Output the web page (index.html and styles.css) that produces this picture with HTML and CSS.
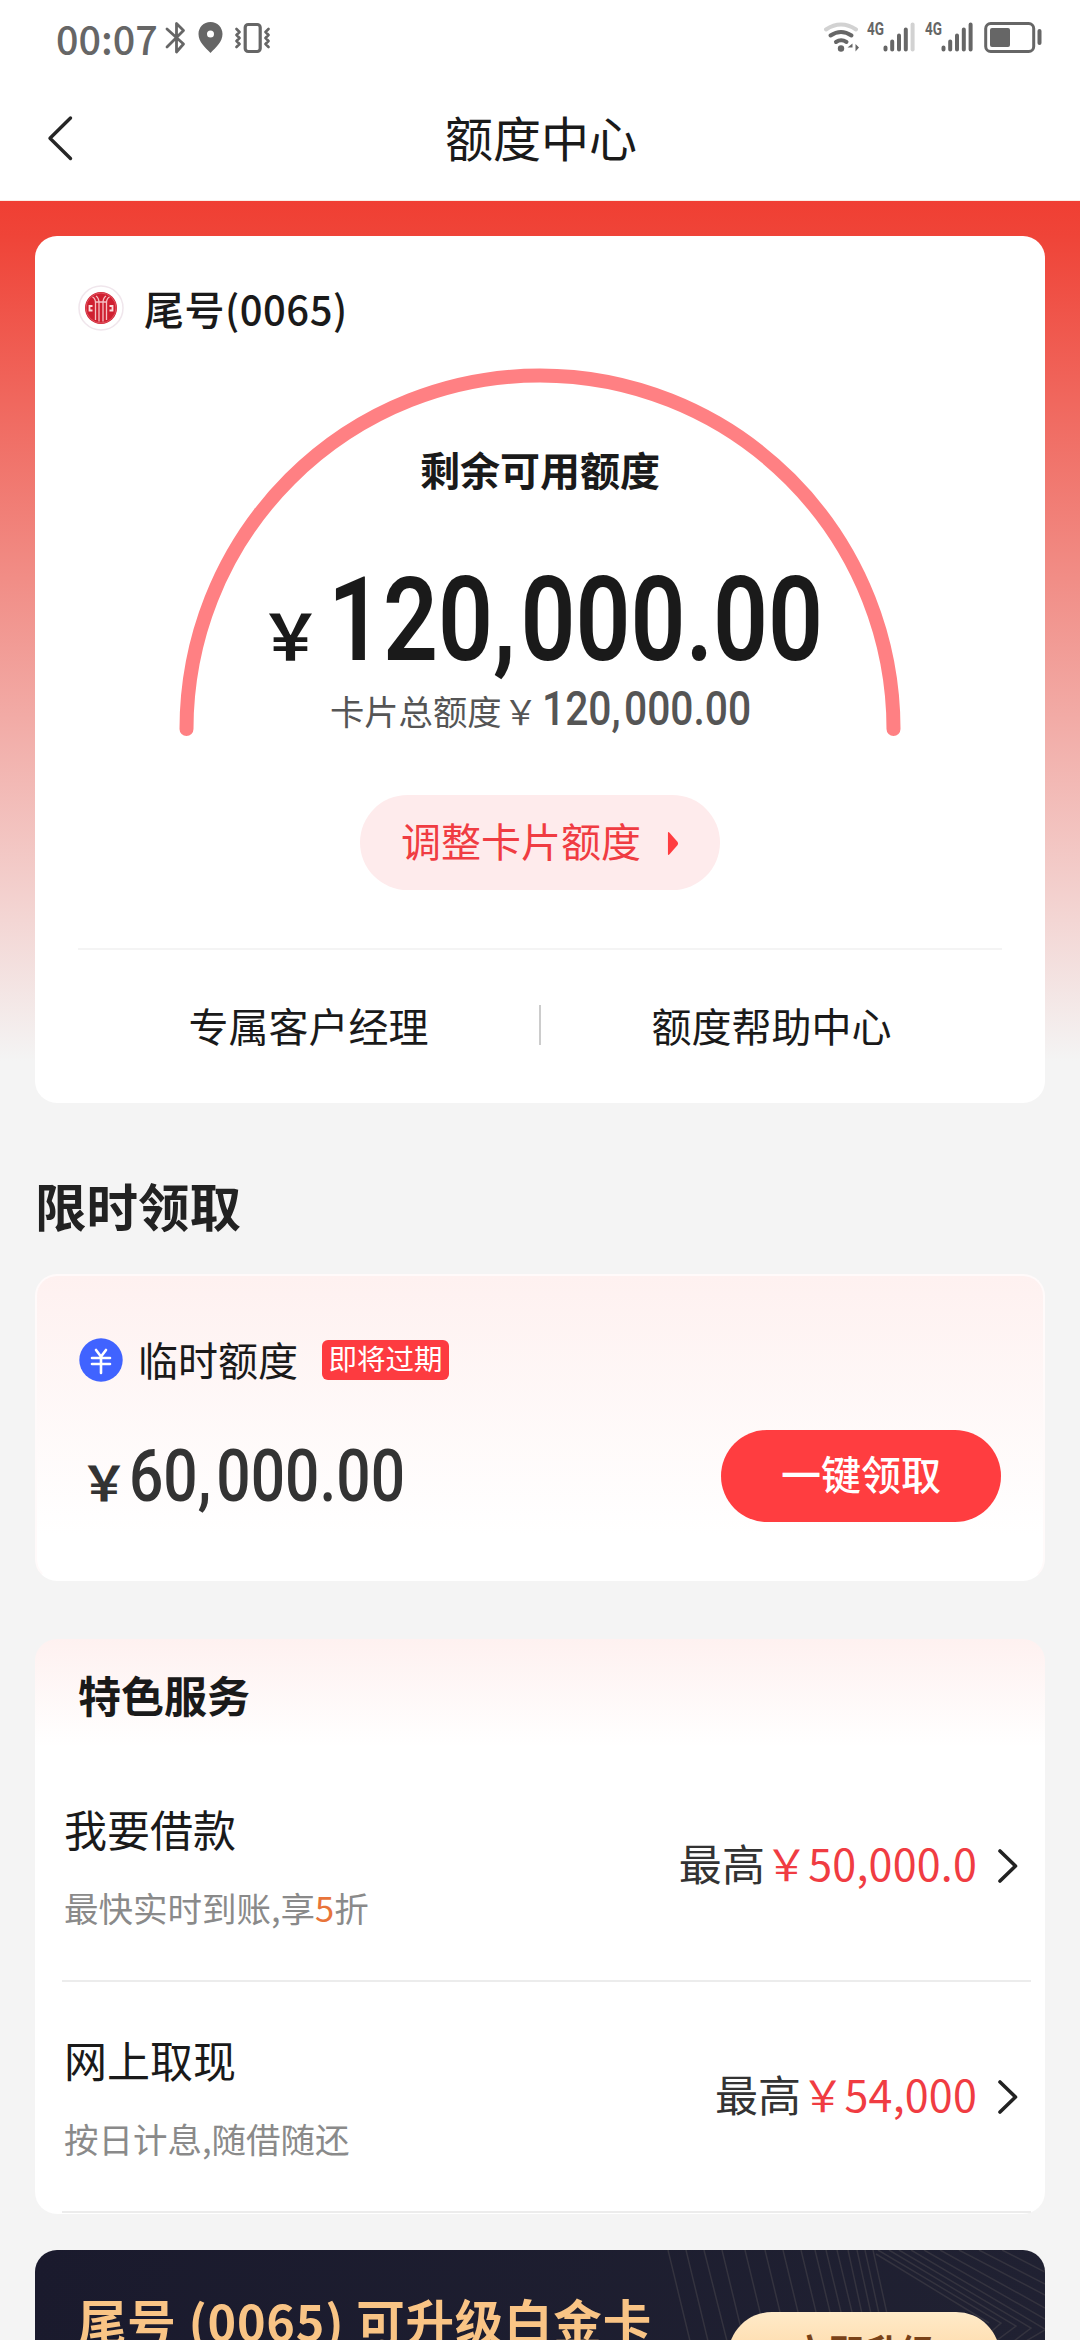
FILE: index.html
```html
<!DOCTYPE html>
<html lang="zh-CN">
<head>
<meta charset="utf-8">
<title>额度中心</title>
<link rel="stylesheet" href="styles.css">
</head>
<body>
<header class="top">
  <div class="status">
    <span class="clock">00:07</span>
    <svg class="status-left" width="110" height="40" viewBox="162 18 110 40" fill="none" stroke="#666" stroke-width="2.8" stroke-linecap="round" stroke-linejoin="round">
      <path d="M167 29 L183.500 44 L176.500 52 V40 M167 47 L183.500 30.500 L176.500 23.500 V35"/>
      <path d="M210.500 22 C203.500 22 198.500 27.500 198.500 34 C198.500 42 205 47 210.500 53 C216 47 222.500 42 222.500 34 C222.500 27.500 217.500 22 210.500 22 Z M210.500 30.500 A3.500 3.500 0 0 1 210.500 37.500 A3.500 3.500 0 0 1 210.500 30.500 Z" fill="#666" fill-rule="evenodd" stroke="none"/>
      <rect x="245.200" y="24.500" width="15" height="27" rx="3" stroke-width="3.200"/>
      <path d="M236.500 29 L239.500 32 L236.500 35 L239.500 38 L236.500 41 L239.500 44 L236.500 47 M268.500 29 L265.500 32 L268.500 35 L265.500 38 L268.500 41 L265.500 44 L268.500 47" stroke-width="2.600"/>
    </svg>
    <svg class="status-right" width="230" height="40" viewBox="820 18 230 40" fill="none" stroke="#666" stroke-linecap="round">
      <path d="M825 29.500 Q840 19.500 855 29.500" stroke="#d2d2d2" stroke-width="4"/>
      <path d="M829.500 35.500 Q840 28.500 850.500 35.500 M835 42 Q840 38.500 845.500 42" stroke-width="4"/>
      <circle cx="840" cy="48.500" r="3.200" fill="#666" stroke="none"/>
      <path d="M846.500 47.500 L851.500 43.500 V51.500 V47.500 Z M854.500 44 V51.500 L858 47.500 Z" fill="#666" stroke="none"/>
      <path d="M884.500 47.500 V49.500 M891.200 41.500 V49.500 M898 35.500 V49.500 M904.800 29.500 V49.500" stroke-width="4"/>
      <path d="M911.600 24.500 V49.500" stroke="#d2d2d2" stroke-width="4"/>
      <path d="M942.500 47.500 V49.500 M949.200 41.500 V49.500 M956 35.500 V49.500 M962.800 29.500 V49.500 M969.600 24.500 V49.500" stroke-width="4"/>
      <rect x="984.700" y="23.500" width="48" height="28" rx="5" stroke-width="3"/>
      <rect x="989" y="28" width="20" height="19" rx="2" fill="#666" stroke="none"/>
      <path d="M1038.500 31 V43" stroke-width="4"/>
      <g class="net" fill="#666" stroke="none"><text x="866" y="35" textLength="17" lengthAdjust="spacingAndGlyphs">4G</text><text x="924" y="35" textLength="17" lengthAdjust="spacingAndGlyphs">4G</text></g>
    </svg>
  </div>
  <nav class="nav">
    <svg class="back" width="30" height="50" viewBox="0 0 30 50" fill="none" stroke="#262626" stroke-width="3.400" stroke-linecap="round" stroke-linejoin="round"><path d="M24.500 5 L4 25.300 L24.500 45.500"/></svg>
    <h1>额度中心</h1>
  </nav>
</header>

<main>
  <section class="card quota">
    <div class="bank">
      <svg width="46" height="46" viewBox="0 0 46 46" fill="none">
        <circle cx="23" cy="23" r="22" fill="#fff" stroke="#f0e6ec" stroke-width="1.500"/>
        <circle cx="23" cy="23" r="16" fill="#cf1f30"/>
        <circle cx="23" cy="23" r="15" stroke="#e4606b" stroke-width=".8"/>
        <path d="M17.500 35 V18 Q17.500 13.500 14.500 12 M21 36.500 V18 Q21 13 18 11 M25 36.500 V18 Q25 13 28 11 M28.500 35 V18 Q28.500 13.500 31.500 12 M17.500 17 H28.500" stroke="#f6c0c4" stroke-width="1.300"/>
        <path d="M14.500 21 H11.500 V25.500 H14.500 M31.500 21 H34.500 V25.500 H31.500" stroke="#fbdcdc" stroke-width="1.800"/>
      </svg>
      <span>尾号(0065)</span>
    </div>
    <div class="gauge">
      <svg class="arc" width="1010" height="410" viewBox="35 338 1010 410" fill="none"><path d="M186.500 729 A353.500 353.500 0 0 1 893.500 729" stroke="#ff8083" stroke-width="14" stroke-linecap="round"/></svg>
      <div class="gauge-text">
        <p class="gauge-title">剩余可用额度</p>
        <p class="amount"><span class="yen">&#xFFE5;</span><span class="din">120<i>,</i>000<i>.</i>00</span></p>
        <p class="total"><span>卡片总额度</span><span class="yen">&#xFFE5;</span><span class="din">120<i>,</i>000<i>.</i>00</span></p>
      </div>
    </div>
    <button class="adjust">调整卡片额度<svg width="12" height="25" viewBox="0 0 13 26" preserveAspectRatio="none"><path d="M1 2 Q1 0 3 2 L11.500 11.500 Q12.500 13 11.500 14.500 L3 24 Q1 26 1 24 Z" fill="#ff3d40"/></svg></button>
    <div class="links"><a>专属客户经理</a><span class="bar"></span><a>额度帮助中心</a></div>
  </section>

  <h2>限时领取</h2>

  <section class="card temp">
    <div class="temp-head">
      <svg width="44" height="44" viewBox="0 0 44 44" fill="none"><circle cx="22" cy="22" r="21.700" fill="#4063ff"/><path d="M17 12 L22 18.500 L27 12 M13 20 H31 M13 26 H31 M22 19 V35" stroke="#fff" stroke-width="2.600" stroke-linecap="round"/></svg>
      <span class="temp-name">临时额度</span><span class="tag">即将过期</span>
    </div>
    <div class="temp-body">
      <p class="temp-amount"><span class="yen">&#xFFE5;</span><span class="din">60<i>,</i>000<i>.</i>00</span></p>
      <button class="claim">一键领取</button>
    </div>
  </section>

  <section class="card services">
    <h3>特色服务</h3>
    <div class="row">
      <div class="info"><p class="name">我要借款</p><p class="desc">最快实时到账,享<em>5</em>折</p></div>
      <p class="max">最高<span>&#xFFE5;50,000.0</span></p>
      <svg class="chev" width="22" height="36" viewBox="0 0 22 36" fill="none" stroke="#222" stroke-width="3.600" stroke-linecap="round" stroke-linejoin="round"><path d="M3 3 L18.500 18 L3 33"/></svg>
    </div>
    <div class="row">
      <div class="info"><p class="name">网上取现</p><p class="desc">按日计息,随借随还</p></div>
      <p class="max">最高<span>&#xFFE5;54,000</span></p>
      <svg class="chev" width="22" height="36" viewBox="0 0 22 36" fill="none" stroke="#222" stroke-width="3.600" stroke-linecap="round" stroke-linejoin="round"><path d="M3 3 L18.500 18 L3 33"/></svg>
    </div>
  </section>

  <section class="banner">
    <svg class="rays" width="1010" height="91" viewBox="35 2249 1010 91" fill="none" stroke="#34333f" stroke-width="1.500">
      <path d="M668 2249 L690 2340 M686 2249 L708 2340 M704 2249 L727 2340 M722 2249 L744 2340 M745 2249 L767 2340 M765 2249 L787 2340 M783 2249 L805 2340 M801 2249 L823 2340 M815 2249 L837 2340 M826 2249 L848 2340 M837 2249 L859 2340 M848 2249 L868 2340 M857 2249 L877 2340 M865 2249 L885 2340 M873 2249 L893 2340"/>
      <path d="M876 2253 L989 2322 M878 2249 L1001 2322 L985 2336 M889 2249 L1016 2325 L996 2340 M899 2249 L1031 2327 L1014 2340 M911 2249 L1045 2328 M924 2249 L1045 2318 M940 2249 L1045 2307 M959 2249 L1045 2294 M979 2249 L1045 2283 M1002 2249 L1045 2271 M1026 2340 L1045 2329"/>
    </svg>
    <p class="upgrade">尾号 (0065) 可升级白金卡</p>
    <button class="gold">立即升级</button>
  </section>
</main>
</body>
</html>
```
FILE: styles.css
```css
* { box-sizing: border-box; margin: 0; padding: 0; }
body {
  width: 1080px;
  height: 2340px;
  overflow: hidden;
  background: #f4f4f4;
  color: #1a1a1a;
  font-family: "Noto Sans CJK SC", sans-serif;
  font-size: 40px;
}
button { border: 0; font: inherit; }
svg { display: block; flex: none; }
em, i { font-style: normal; font-weight: inherit; }

.top { height: 201px; background: #fff; border-bottom: 1px solid #fbeee6; }
.status { display: flex; align-items: center; height: 76px; padding: 0 29px 0 56px; }
.clock { width: 106px; color: #666; font-size: 39.500px; font-weight: 500; line-height: 76px; }
.status-right { margin-left: auto; }
.net { font: 700 18px Roboto, sans-serif; }
.nav { display: flex; align-items: center; height: 124px; padding: 0 44px 0 46px; }
.nav h1 { flex: 1; margin-right: 30px; padding-bottom: 5px; text-align: center; font-size: 48px; font-weight: 400; line-height: 116px; }

main {
  height: 2139px;
  padding: 35px 35px 0;
  background: linear-gradient(#f03f33 0, #ef4438 35px, #f4f4f4 860px) no-repeat #f4f4f4;
  overflow: hidden;
}
.card { border-radius: 22px; background: #fff; }

/* Remaining quota */
.quota { height: 867px; display: flex; flex-direction: column; }
.bank { display: flex; align-items: center; height: 60px; margin: 42px 0 0 43px; }
.bank span { margin-left: 20px; font-weight: 500; line-height: 60px; letter-spacing: .5px; }
.gauge { display: grid; height: 457px; }
.gauge > * { grid-area: 1 / 1; }
.gauge-title { margin-top: 101px; text-align: center; font-weight: 700; line-height: 60px; }
.din {
  font-family: Roboto, sans-serif;
  font-weight: 600;
  white-space: nowrap;
  transform: scaleX(.84);
  transform-origin: 0 50%;
}
.amount { display: flex; align-items: baseline; height: 100px; margin-top: 71px; padding-left: 224px; line-height: 100px; }
.amount .yen { width: 69px; font-size: 63px; font-weight: 700; }
.amount .din { font-size: 117px; transform: scaleX(.823); }
.amount i:first-of-type { letter-spacing: 6px; }
.total { display: flex; align-items: baseline; height: 50px; margin-top: 14px; padding-left: 295px; line-height: 50px; color: #555; font-size: 34.300px; }
.total .yen { width: 40px; padding-left: 2px; }
.total .din { font-size: 49px; font-weight: 500; transform: scaleX(.832); }
.total i:first-of-type { letter-spacing: 4px; }
.adjust {
  display: flex;
  align-items: center;
  align-self: center;
  width: 360px;
  height: 95px;
  padding: 0 0 5px 41px;
  border-radius: 48px;
  background: #feebec;
  color: #f03c42;
  line-height: 90px;
}
.adjust svg { margin: 6px 0 0 26px; }
.links { display: flex; align-items: center; margin: 58px 43px 0; height: 154px; padding-bottom: 2px; border-top: 2px solid #f4f4f4; }
.links a { flex: 1; text-align: center; line-height: 80px; }
.links .bar { width: 2px; height: 40px; background: #ccc; }

h2 { height: 171px; padding: 62px 0 0; font-size: 51.500px; font-weight: 700; line-height: 80px; color: #222; }

/* Temporary quota */
.temp { height: 307px; padding: 52px 42px 0; border: 2px solid #fff; border-color: #fffafa #fffafa #fff; background: linear-gradient(#fef1f0, #fff 85%); }
.temp-head { display: flex; align-items: center; height: 64px; }
.temp-name { margin-left: 15px; line-height: 60px; padding-bottom: 2px; }
.tag { width: 127px; height: 40px; margin-left: 24px; border-radius: 6px; background: #fd3b40; color: #fff; font-size: 28.500px; line-height: 36px; text-align: center; }
.temp-body { display: flex; justify-content: space-between; height: 92px; margin-top: 38px; }
.temp-amount { display: flex; align-items: baseline; height: 92px; line-height: 94px; color: #333; }
.temp-amount .yen { width: 50px; padding-left: 1px; font-size: 48px; font-weight: 700; }
.temp-amount .din { font-size: 72px; font-weight: 500; }
.temp-amount i:first-of-type { letter-spacing: 6px; }
.claim { width: 280px; height: 92px; border-radius: 46px; background: #ff3d40; color: #fff; font-weight: 500; line-height: 86px; padding-bottom: 6px; }

/* Services */
.services { height: 575px; margin-top: 58px; background: linear-gradient(#fef1f0, #fff 108px); }
h3 { height: 112px; padding: 25px 43px 0; font-size: 43px; font-weight: 700; line-height: 60px; }
.row { display: flex; height: 231px; align-items: center; margin: 0 14px 0 27px; padding: 0 12px 0 2px; border-bottom: 2px solid #ececec; }
.info { flex: 1; }
.name { font-size: 43px; line-height: 60px; margin-top: 4px; }
.desc { margin-top: 19px; font-size: 34.500px; line-height: 60px; color: #8a8a8a; }
.desc em { color: #e8743a; }
.max { padding-bottom: 7px; font-size: 43px; line-height: 60px; letter-spacing: .2px; color: #333; }
.max span { color: #f03c42; }
.chev { margin-left: 20px; }

/* Upgrade banner */
.banner { position: relative; display: flex; align-items: flex-start; justify-content: space-between; height: 91px; margin-top: 36px; padding: 0 45px 0 43px; border-radius: 22px 22px 0 0; background: linear-gradient(100deg, #1a1a2d, #202132); overflow: hidden; }
.rays { position: absolute; left: 0; top: 0; }
.upgrade { margin-top: 30px; font-size: 48.500px; font-weight: 700; line-height: 80px; letter-spacing: .8px; color: #f9c485; white-space: nowrap; }
.gold { position: relative; width: 272px; height: 88px; margin-top: 62px; padding-bottom: 11px; border-radius: 44px; background: linear-gradient(#ffebc9, #fdc88a); color: #7a4218; font-size: 36px; font-weight: 700; line-height: 77px; }
```
